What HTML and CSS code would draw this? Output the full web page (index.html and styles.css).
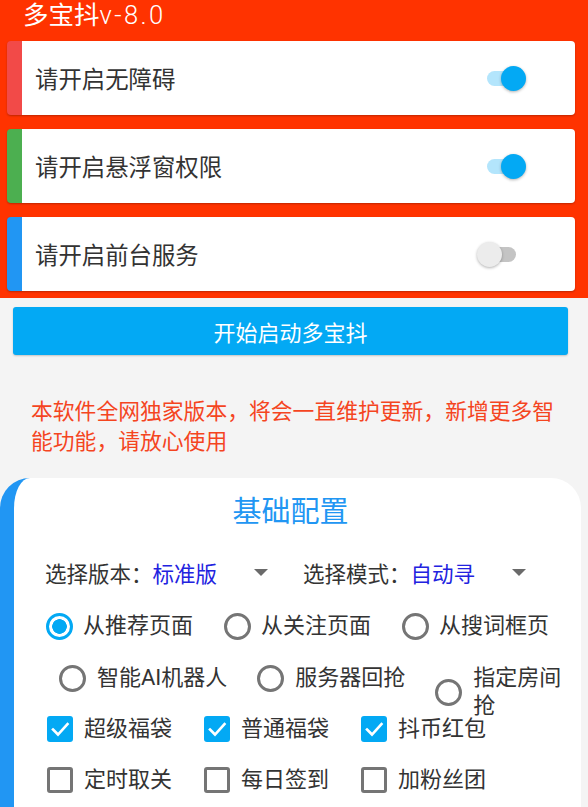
FILE: index.html
```html
<!DOCTYPE html>
<html lang="zh-CN">
<head>
<meta charset="utf-8">
<title>多宝抖</title>
<link rel="stylesheet" href="styles.css">
</head>
<body>
<header class="top">
  <div class="app-title">多宝抖<span class="ver">v-8.0</span></div>
  <div class="perm-list">
    <div class="perm perm-red">
      <span class="perm-label">请开启无障碍</span>
      <span class="switch on"><span class="track"></span><span class="thumb"></span></span>
    </div>
    <div class="perm perm-green">
      <span class="perm-label">请开启悬浮窗权限</span>
      <span class="switch on"><span class="track"></span><span class="thumb"></span></span>
    </div>
    <div class="perm perm-blue">
      <span class="perm-label">请开启前台服务</span>
      <span class="switch"><span class="track"></span><span class="thumb"></span></span>
    </div>
  </div>
</header>

<div class="start-btn">开始启动多宝抖</div>

<p class="notice">本软件全网独家版本，将会一直维护更新，新增更多智能功能，请放心使用</p>

<section class="config">
  <div class="config-title">基础配置</div>

  <div class="spin-row">
    <div class="spin">
      <span class="spin-label">选择版本：</span>
      <span class="spin-value">标准版</span>
      <span class="spin-arrow"></span>
    </div>
    <div class="spin">
      <span class="spin-label">选择模式：</span>
      <span class="spin-value">自动寻</span>
      <span class="spin-arrow"></span>
    </div>
  </div>

  <div class="radio-row">
    <label class="opt"><span class="radio checked"></span><span class="opt-text">从推荐页面</span></label>
    <label class="opt"><span class="radio"></span><span class="opt-text">从关注页面</span></label>
    <label class="opt"><span class="radio"></span><span class="opt-text">从搜词框页</span></label>
  </div>

  <div class="radio-row2">
    <label class="opt fixed"><span class="radio"></span><span class="opt-text">智能AI机器人</span></label>
    <label class="opt fixed"><span class="radio"></span><span class="opt-text">服务器回抢</span></label>
    <label class="opt shrink"><span class="radio"></span><span class="opt-text">指定房间抢</span></label>
  </div>

  <div class="check-row first">
    <label class="opt"><span class="box checked"><svg viewBox="0 0 26 26" width="26" height="26"><polyline points="6,13.5 11,18.5 20.5,8" fill="none" stroke="#fff" stroke-width="2.6" stroke-linecap="square"/></svg></span><span class="opt-text">超级福袋</span></label>
    <label class="opt"><span class="box checked"><svg viewBox="0 0 26 26" width="26" height="26"><polyline points="6,13.5 11,18.5 20.5,8" fill="none" stroke="#fff" stroke-width="2.6" stroke-linecap="square"/></svg></span><span class="opt-text">普通福袋</span></label>
    <label class="opt"><span class="box checked"><svg viewBox="0 0 26 26" width="26" height="26"><polyline points="6,13.5 11,18.5 20.5,8" fill="none" stroke="#fff" stroke-width="2.6" stroke-linecap="square"/></svg></span><span class="opt-text">抖币红包</span></label>
  </div>

  <div class="check-row second">
    <label class="opt"><span class="box"></span><span class="opt-text">定时取关</span></label>
    <label class="opt"><span class="box"></span><span class="opt-text">每日签到</span></label>
    <label class="opt"><span class="box"></span><span class="opt-text">加粉丝团</span></label>
  </div>
</section>
</body>
</html>
```
FILE: styles.css
```css
* { box-sizing: border-box; }

html, body {
  margin: 0;
  padding: 0;
}

body {
  width: 588px;
  background: #f4f4f4;
  font-family: Roboto, "Noto Sans CJK SC", sans-serif;
  color: #333333;
  overflow: hidden;
}

/* ---------- header ---------- */
.top {
  background: #ff3300;
  padding: 0 13px 7px 7px;
}

.app-title {
  height: 41px;
  line-height: 31px;
  padding-left: 16px;
  font-size: 25.5px;
  color: #ffffff;
}

.ver {
  letter-spacing: 2.4px;
  font-weight: 300;
}

.perm-list {
  display: flex;
  flex-direction: column;
  gap: 14px;
}

.perm {
  height: 74px;
  display: flex;
  align-items: center;
  background: #ffffff;
  border-left: 15px solid #f44848;
  border-radius: 4px;
  padding-left: 13px;
  box-shadow: 0 1px 2px rgba(0, 0, 0, 0.25);
}

.perm-red { border-left-color: #f24a48; }
.perm-green { border-left-color: #4caf50; }
.perm-blue { border-left-color: #2196f3; }

.perm-label {
  flex: 1;
  font-size: 23.4px;
  color: #333333;
}

.switch {
  position: relative;
  width: 48px;
  height: 24px;
  margin-right: 50px;
}

.switch .track {
  position: absolute;
  left: 10px;
  top: 4.5px;
  width: 29px;
  height: 15px;
  border-radius: 8px;
  background: #c4c4c4;
}

.switch .thumb {
  position: absolute;
  left: 0;
  top: 0;
  width: 25px;
  height: 25px;
  border-radius: 50%;
  background: #ececec;
  box-shadow: 0 1px 3px rgba(0, 0, 0, 0.3);
}

.switch.on .track { background: #b3e5fc; }

.switch.on .thumb {
  left: 24px;
  background: #03a9f4;
}

/* ---------- button ---------- */
.start-btn {
  margin: 9px 20px 0 13px;
  height: 48px;
  display: flex;
  align-items: center;
  justify-content: center;
  background: #03a9f4;
  color: #ffffff;
  font-size: 22px;
  border-radius: 3px;
  box-shadow: 0 1px 2px rgba(0, 0, 0, 0.2);
}

/* ---------- notice ---------- */
.notice {
  margin: 42px 0 0 0;
  padding: 0 23px 0 31px;
  font-size: 21.8px;
  line-height: 30px;
  color: #f4451f;
}

/* ---------- config card ---------- */
.config {
  margin: 21px 7px 0 0;
  background: #ffffff;
  border-left: 14px solid #2196f3;
  border-radius: 30px 30px 0 0;
  padding-bottom: 20px;
}

.config-title {
  padding-top: 14px;
  padding-right: 14px;
  height: 54px;
  line-height: 40px;
  text-align: center;
  font-size: 29px;
  color: #2196f3;
}

.spin-row {
  display: grid;
  grid-template-columns: 1fr 1fr;
  margin: 16px 20px 0 31px;
  height: 48px;
}

.spin {
  display: flex;
  align-items: center;
  font-size: 21.5px;
}

.spin-label { color: #333333; }

.spin-value { color: #2222e0; }

.spin-arrow {
  margin-left: auto;
  margin-right: 35px;
  width: 0;
  height: 0;
  border-left: 7px solid transparent;
  border-right: 7px solid transparent;
  border-top: 7px solid #6a6a6a;
}

.opt {
  display: flex;
  align-items: center;
  gap: 11px;
  font-size: 22px;
  line-height: 28px;
  color: #333333;
}

.radio {
  flex: none;
  width: 27px;
  height: 27px;
  border: 3px solid #757575;
  border-radius: 50%;
}

.radio.checked {
  border-color: #03a9f4;
  background: radial-gradient(circle closest-side, #03a9f4 0 7px, transparent 7.6px);
}

.radio-row {
  display: grid;
  grid-template-columns: repeat(3, 178px);
  margin: 4px 0 0 32px;
  height: 52px;
  align-items: center;
}

.radio-row .opt { gap: 10px; }

.radio-row2 {
  display: flex;
  align-items: flex-start;
  gap: 30px;
  margin-top: 12px;
  padding: 0 10px 0 45px;
  height: 40px;
}

.radio-row2 .fixed { flex: none; }

.radio-row2 .shrink {
  flex: 0 1 auto;
  min-width: 0;
}

.check-row {
  display: flex;
  align-items: center;
  gap: 32px;
  padding-left: 33px;
}

.check-row.first { height: 50px; }
.check-row.second { height: 52px; }

.box {
  flex: none;
  width: 26px;
  height: 26px;
  border: 3px solid #757575;
  border-radius: 3px;
}

.box.checked {
  border: none;
  background: #03a9f4;
}

.box svg { display: block; }
```
